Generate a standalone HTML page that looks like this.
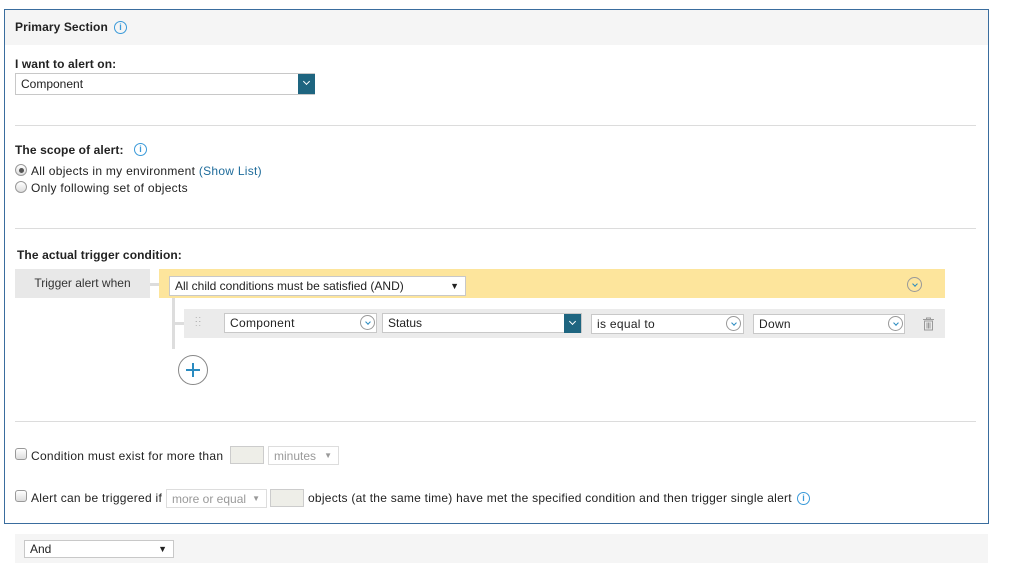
<!DOCTYPE html>
<html><head><style>
*{box-sizing:border-box;margin:0;padding:0}
body{width:1025px;height:568px;background:#fff;font-family:"Liberation Sans",sans-serif;font-size:12px;color:#222;position:relative;overflow:hidden}
.a{position:absolute}
.t{letter-spacing:0.28px}
.b{font-weight:bold;letter-spacing:0.1px}
.sel{position:absolute;background:#fff;border:1px solid #c8c8c8;height:20px;line-height:18px;padding-left:5px;font-size:12px;white-space:nowrap;letter-spacing:0}
.hr{position:absolute;left:15px;width:961px;height:1px;background:#dcdcdc}
.info{position:absolute;width:13px;height:13px;border:1.5px solid #3a9ad9;border-radius:50%;color:#3a9ad9;font-size:9px;line-height:10px;text-align:center;font-weight:bold;letter-spacing:0}
.circ{position:absolute;width:15px;height:15px;border:1px solid #999;border-radius:50%;}
.circ:after{content:"";position:absolute;left:5px;top:3.5px;width:3px;height:3px;border-right:1.5px solid #2a8bc0;border-bottom:1.5px solid #2a8bc0;transform:rotate(45deg)}
.chk{position:absolute;width:12px;height:12px;border:1px solid #999;border-radius:3px;background:linear-gradient(#fff,#ddd)}
.rad{position:absolute;width:12px;height:12px;border:1px solid #999;border-radius:50%;background:linear-gradient(#fff,#ddd)}
.dis{position:absolute;border:1px solid #ccc;background:#eeeee8;height:18px}
.btn{position:absolute;background:#1e6580}
.btn:after{content:"";position:absolute;left:6px;top:5px;width:4px;height:4px;border-right:1.5px solid #fff;border-bottom:1.5px solid #fff;transform:rotate(45deg)}
</style></head><body>
<div class="a" style="left:4px;top:9px;width:985px;height:515px;border:1px solid #3a6d9e"></div>
<div class="a" style="left:5px;top:10px;width:983px;height:35px;background:#f5f5f5"></div>
<div class="a b" style="left:15px;top:20px">Primary Section</div>
<div class="info" style="left:114px;top:21px">i</div>

<div class="a b" style="left:15px;top:57px">I want to alert on:</div>
<div class="sel" style="left:15px;top:73px;width:300px;height:22px;line-height:20px">Component</div>
<div class="btn" style="left:298px;top:74px;width:17px;height:20px"></div>

<div class="hr" style="top:125px"></div>
<div class="a b" style="left:15px;top:143px">The scope of alert:</div>
<div class="info" style="left:134px;top:143px">i</div>
<div class="rad" style="left:15px;top:164px"></div>
<div class="a" style="left:19px;top:168px;width:5px;height:5px;border-radius:50%;background:#555"></div>
<div class="a t" style="left:31px;top:164px">All objects in my environment <span style="color:#1e6b9a">(Show List)</span></div>
<div class="rad" style="left:15px;top:181px"></div>
<div class="a t" style="left:31px;top:181px">Only following set of objects</div>

<div class="hr" style="top:228px"></div>
<div class="a b" style="left:17px;top:248px">The actual trigger condition:</div>
<div class="a" style="left:15px;top:269px;width:135px;height:29px;background:#e8e8e8;line-height:29px;text-align:center;color:#333">Trigger alert when</div>
<div class="a" style="left:150px;top:283px;width:9px;height:3px;background:#ddd"></div>
<div class="a" style="left:159px;top:269px;width:786px;height:29px;background:#fde59c"></div>
<div class="sel" style="left:169px;top:276px;width:297px">All child conditions must be satisfied (AND)<span class="a" style="right:6px;top:0;font-size:9px">▼</span></div>
<div class="circ" style="left:907px;top:277px"></div>
<div class="a" style="left:172px;top:298px;width:3px;height:51px;background:#ddd"></div>
<div class="a" style="left:175px;top:322px;width:9px;height:3px;background:#ddd"></div>
<div class="a" style="left:184px;top:309px;width:761px;height:29px;background:#ebebeb"></div>
<div class="a" style="left:195px;top:317px;color:#aaa;font-size:9px;line-height:4px;letter-spacing:1px">::<br>::</div>
<div class="sel" style="left:224px;top:313px;width:153px;letter-spacing:0.3px">Component</div>
<div class="circ" style="left:360px;top:315px"></div>
<div class="sel" style="left:382px;top:313px;width:200px">Status</div>
<div class="btn" style="left:564px;top:314px;width:17px;height:19px"></div>
<div class="sel" style="left:591px;top:314px;width:153px;letter-spacing:0.3px">is equal to</div>
<div class="circ" style="left:726px;top:316px"></div>
<div class="sel" style="left:753px;top:314px;width:152px;letter-spacing:0.3px">Down</div>
<div class="circ" style="left:888px;top:316px"></div>
<svg class="a" style="left:922px;top:317px" width="13" height="14" viewBox="0 0 13 14"><path d="M1 2.5h11M4.5 2.5V1h4v1.5M2.5 4h8v9h-8zM5 5.5v6M6.5 5.5v6M8 5.5v6" stroke="#999" fill="none" stroke-width="1"/></svg>
<div class="a" style="left:178px;top:355px;width:30px;height:30px;border:1px solid #888;border-radius:50%"></div>
<div class="a" style="left:186px;top:369px;width:14px;height:1.5px;background:#2a8bc0"></div>
<div class="a" style="left:192.3px;top:363px;width:1.5px;height:14px;background:#2a8bc0"></div>

<div class="hr" style="top:421px"></div>
<div class="chk" style="left:15px;top:448px"></div>
<div class="a t" style="left:31px;top:449px">Condition must exist for more than</div>
<div class="dis" style="left:230px;top:446px;width:34px"></div>
<div class="sel" style="left:268px;top:446px;width:71px;height:19px;color:#999;border-color:#ddd">minutes<span class="a" style="right:6px;top:0;font-size:8px">▼</span></div>

<div class="chk" style="left:15px;top:490px"></div>
<div class="a t" style="left:31px;top:491px">Alert can be triggered if</div>
<div class="sel" style="left:166px;top:489px;width:101px;height:19px;color:#999;border-color:#ddd">more or equal<span class="a" style="right:6px;top:0;font-size:8px">▼</span></div>
<div class="dis" style="left:270px;top:489px;width:34px"></div>
<div class="a" style="left:308px;top:491px;letter-spacing:0.25px">objects (at the same time) have met the specified condition and then trigger single alert</div>
<div class="info" style="left:797px;top:492px">i</div>

<div class="a" style="left:15px;top:534px;width:973px;height:29px;background:#f5f5f5"></div>
<div class="sel" style="left:24px;top:540px;width:150px;height:18px;line-height:16px">And<span class="a" style="right:6px;top:0;font-size:9px">▼</span></div>
</body></html>
